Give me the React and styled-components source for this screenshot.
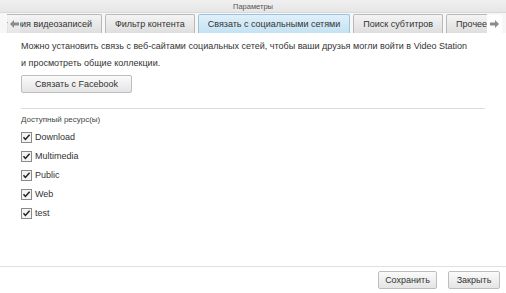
import React from 'react';
import styled, { createGlobalStyle } from 'styled-components';

const GlobalStyle = createGlobalStyle`
  html, body {
    margin: 0;
    padding: 0;
    background: #ffffff;
  }
  body {
    font-family: 'Liberation Sans', Arial, sans-serif;
    color: #333;
  }
`;

const Window = styled.div`
  width: 506px;
  height: 293px;
  display: flex;
  flex-direction: column;
  background: #fff;
  overflow: hidden;
`;

const TitleBar = styled.div`
  height: 12px;
  display: flex;
  align-items: center;
  justify-content: center;
  background: linear-gradient(#f0f0f0, #e6e6e6);
  font-size: 7.5px;
  color: #555;
`;

const TabStrip = styled.div`
  position: relative;
  height: 20px;
  display: flex;
  align-items: flex-end;
  background: #f7f7f7;
  border-top: 1px solid #d8d8d8;
  padding: 0 4px 0 7px;
`;

const TabViewport = styled.div`
  flex: 1;
  overflow: hidden;
  height: 19px;
`;

const TabRow = styled.div`
  display: flex;
  gap: 3px;
  height: 19px;
  margin-left: -21px;
`;

const Tab = styled.div`
  flex: none;
  display: flex;
  align-items: center;
  padding: 0 9px;
  height: 18px;
  border: 1px solid ${(p) => (p.active ? '#9cc3da' : '#b9b9b9')};
  border-bottom: none;
  border-radius: 2px 2px 0 0;
  background: ${(p) =>
    p.active ? 'linear-gradient(#dff0fa, #c4e2f3)' : 'linear-gradient(#f4f4f4, #dedede)'};
  font-size: 9px;
  color: #333;
  white-space: nowrap;
`;

const ArrowButton = styled.div`
  position: ${(p) => (p.side === 'left' ? 'absolute' : 'static')};
  left: 8px;
  bottom: 0;
  width: ${(p) => (p.side === 'left' ? 12 : 15)}px;
  height: 18px;
  display: flex;
  align-items: center;
  justify-content: center;
  background: ${(p) => (p.side === 'left' ? 'linear-gradient(#f6f6f6, #e6e6e6)' : '#fff')};
`;

const Content = styled.div`
  flex: 1;
  padding: 5px 21px 0 21px;
  font-size: 9px;
`;

const Description = styled.p`
  margin: 0;
  line-height: 17px;
  color: #333;
  white-space: nowrap;
`;

const ButtonRow = styled.div`
  margin-top: 3px;
  display: flex;
`;

const Button = styled.button`
  font-family: 'Liberation Sans', Arial, sans-serif;
  font-size: 9px;
  color: #333;
  height: 18px;
  width: ${(p) => p.w}px;
  padding: 0;
  border: 1px solid #bdbdbd;
  border-radius: 2px;
  background: linear-gradient(#fbfbfb, #e4e4e4);
  cursor: pointer;
`;

const Divider = styled.div`
  height: 1px;
  background: #dcdcdc;
  margin: ${(p) => p.margin || '0'};
`;

const SectionLabel = styled.div`
  font-size: 8px;
  line-height: 11px;
  color: #444;
  margin: 5px 0 5px;
`;

const CheckList = styled.div`
  display: flex;
  flex-direction: column;
  gap: 5px;
`;

const CheckRow = styled.label`
  display: flex;
  align-items: center;
  gap: 3px;
  height: 14px;
  font-size: 9px;
  color: #333;
`;

const Footer = styled.div`
  border-top: 1px solid #e0e0e0;
  height: 26px;
  display: flex;
  align-items: center;
  justify-content: flex-end;
  gap: 11px;
  padding: 0 6px 0 0;
`;

const CheckBox = () => (
  <svg width="11" height="11" viewBox="0 0 11 11">
    <rect x="0.5" y="0.5" width="10" height="10" fill="#f4f4f4" stroke="#8a8a8a" />
    <path d="M2.5 5.3 L4.4 7.4 L8.6 2.8" fill="none" stroke="#222" strokeWidth="1.5" />
  </svg>
);

const Arrow = ({ dir }) => (
  <svg width="9" height="8" viewBox="0 0 9 8">
    <path
      d={dir === 'left' ? 'M0 4 L4 0 L4 2.5 L9 2.5 L9 5.5 L4 5.5 L4 8 Z' : 'M9 4 L5 0 L5 2.5 L0 2.5 L0 5.5 L5 5.5 L5 8 Z'}
      fill="#8c8c8c"
    />
  </svg>
);

const tabs = [
  { label: 'История видеозаписей' },
  { label: 'Фильтр контента' },
  { label: 'Связать с социальными сетями', active: true },
  { label: 'Поиск субтитров' },
  { label: 'Прочее' },
];

const shares = ['Download', 'Multimedia', 'Public', 'Web', 'test'];

export default function App() {
  return (
    <>
      <GlobalStyle />
      <Window>
        <TitleBar>Параметры</TitleBar>
        <TabStrip>
          <TabViewport>
            <TabRow>
              {tabs.map((t) => (
                <Tab key={t.label} active={t.active}>
                  {t.label}
                </Tab>
              ))}
            </TabRow>
          </TabViewport>
          <ArrowButton side="left">
            <Arrow dir="left" />
          </ArrowButton>
          <ArrowButton side="right">
            <Arrow dir="right" />
          </ArrowButton>
        </TabStrip>
        <Content>
          <Description>
            Можно установить связь с веб-сайтами социальных сетей, чтобы ваши друзья могли войти в Video Station
            <br />и просмотреть общие коллекции.
          </Description>
          <ButtonRow>
            <Button w={111}>Связать с Facebook</Button>
          </ButtonRow>
          <Divider margin="15px 0 0" />
          <SectionLabel>Доступный ресурс(ы)</SectionLabel>
          <CheckList>
            {shares.map((s) => (
              <CheckRow key={s}>
                <CheckBox />
                {s}
              </CheckRow>
            ))}
          </CheckList>
        </Content>
        <Footer>
          <Button w={59}>Сохранить</Button>
          <Button w={52}>Закрыть</Button>
        </Footer>
      </Window>
    </>
  );
}
